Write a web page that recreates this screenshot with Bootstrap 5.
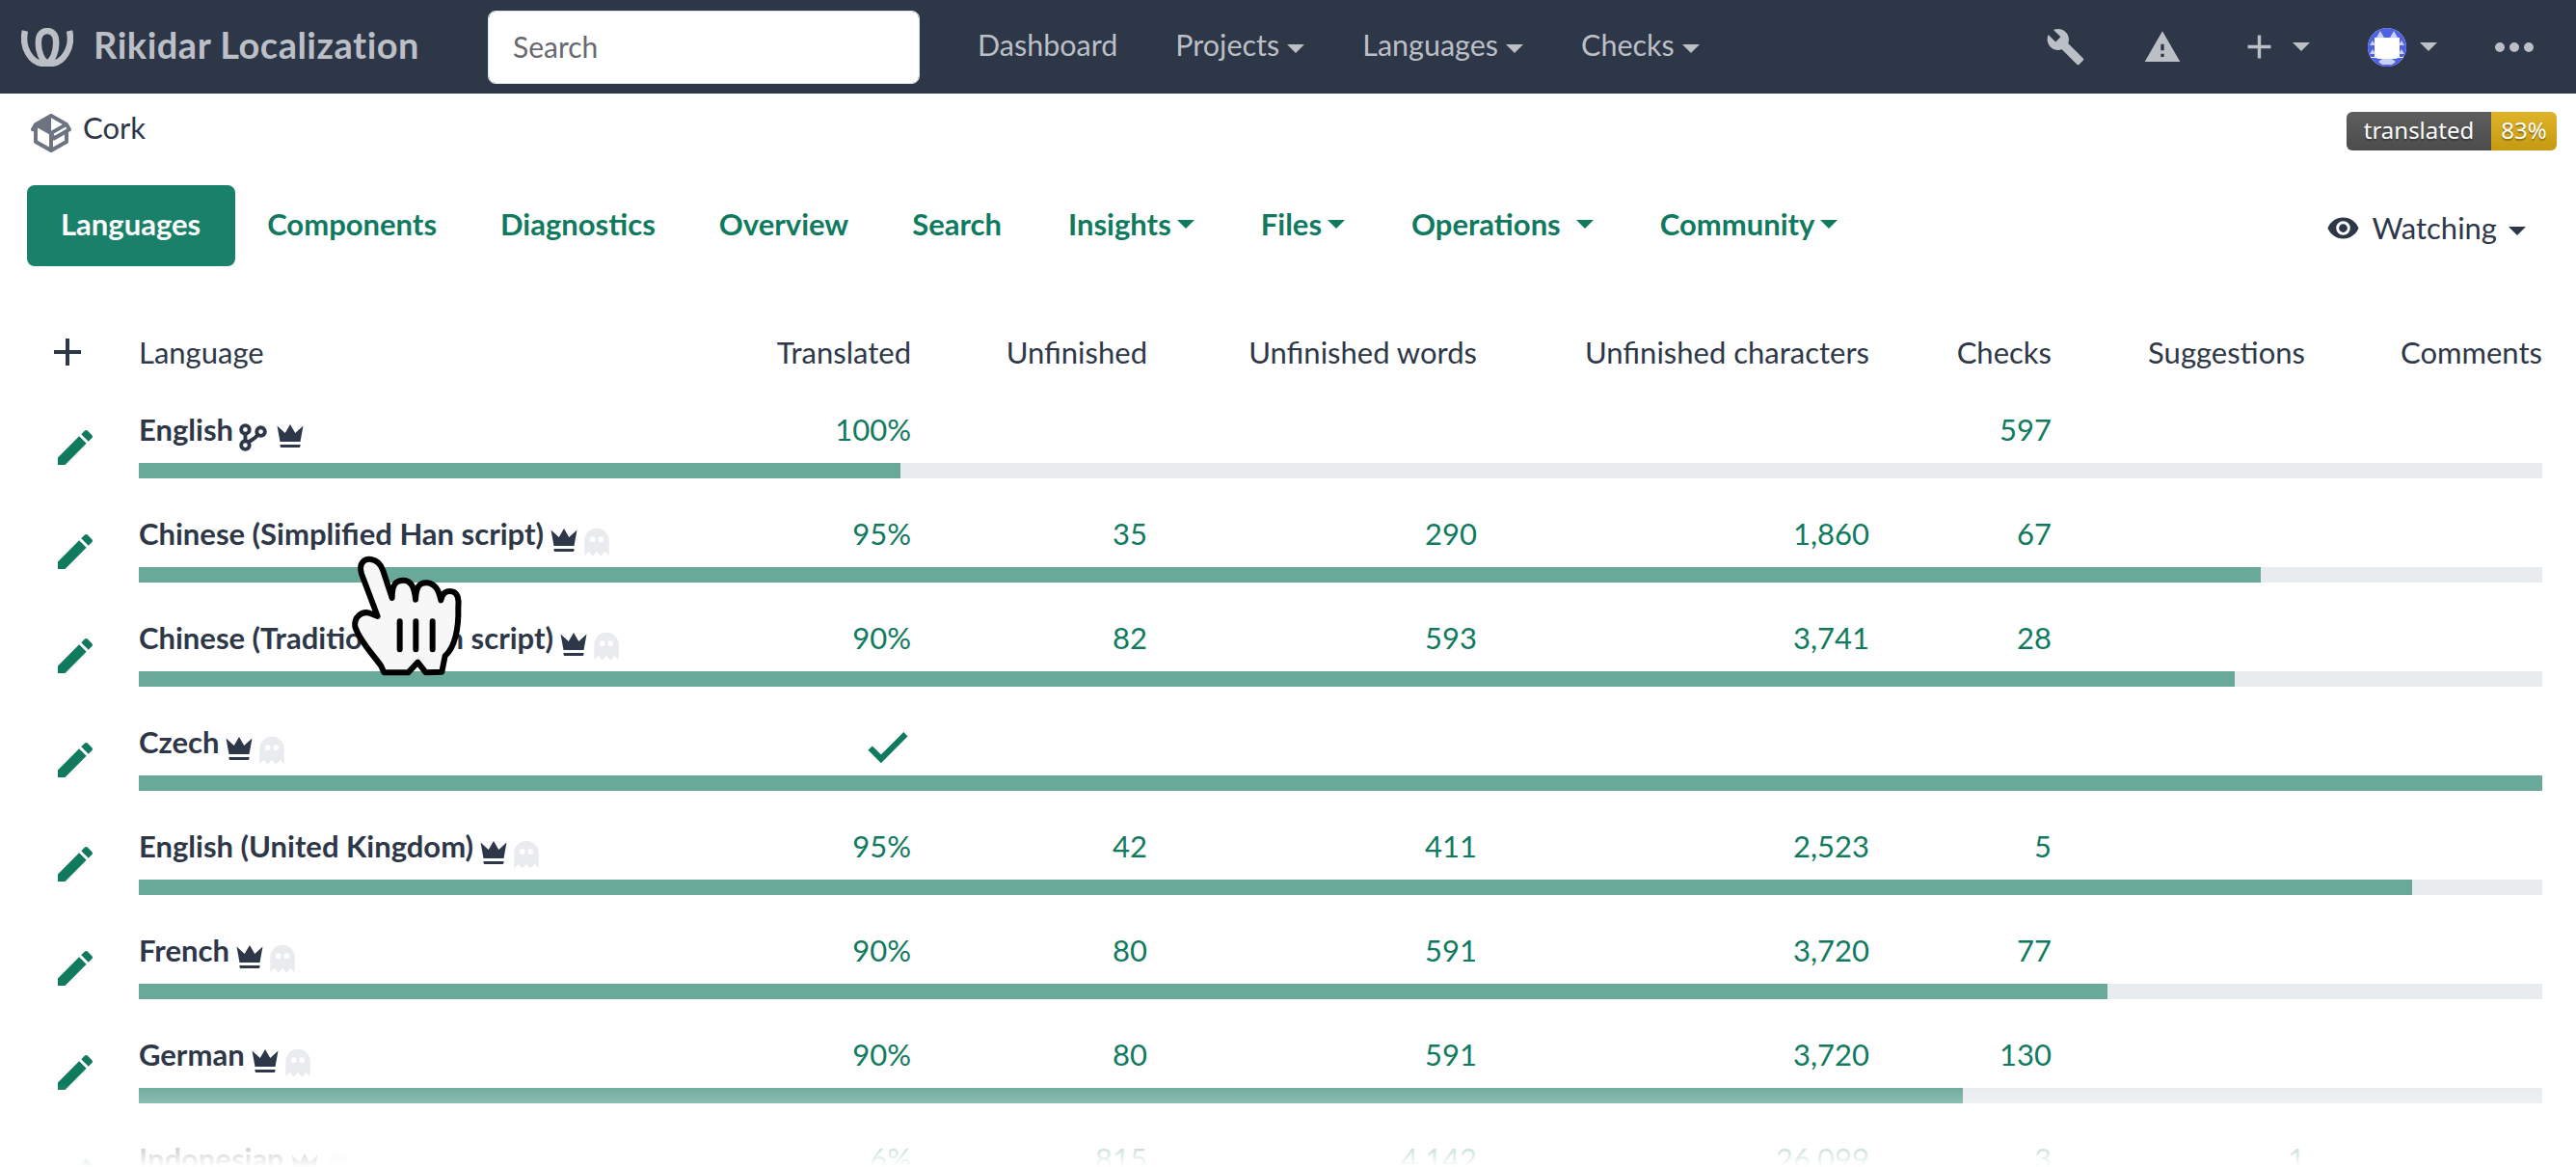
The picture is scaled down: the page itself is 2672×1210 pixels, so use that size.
<!DOCTYPE html>
<html lang="en">
<head>
    <meta charset="UTF-8">
    <title>Cork - Rikidar Localization</title>
    <link href="https://cdn.jsdelivr.net/npm/bootstrap@5.3.0/dist/css/bootstrap.min.css" rel="stylesheet">
    <style>
        html, body { height: 100%; overflow: hidden; }
        body { font-family: "Lato", "Liberation Sans", sans-serif; font-size: 31px; color: #2d3748; background: #fff; }
        svg { fill: currentColor; display: block; flex: none; }
        .top-bar { background: #2d3748; height: 97px; padding: 0 34px 0 22px; color: #bcbfc5; }
        .top-bar a { color: #bcbfc5; text-decoration: none; }
        .brand { font-size: 38px; letter-spacing: .5px; font-weight: 700; width: 484px; gap: 21px; padding-bottom: 4px; }
        .brand svg { margin-top: 4px; }
        .nav-search { width: 448px; height: 76px; border-radius: 8px; font-size: 30px; padding: 0 25px 2px; border: 1px solid #dee2e6; }
        .nav-search::placeholder { color: #666a70; }
        .top-links { gap: 60px; margin-left: 60px; padding-bottom: 3px; font-size: 30.5px; }
        .top-links .caret-down { margin-left: 8px; }
        .caret-down { display: inline-block; border-left: 9px solid transparent; border-right: 9px solid transparent; border-top: 9px solid currentColor; margin-left: 6px; vertical-align: middle; }
        .top-icons { margin-left: auto; }
        .top-icons .gap-big { margin-left: 60px; }
        .top-icons .gap-dots { margin-left: 50px; }
        .top-icons .caret-gap { margin-left: 14px; }
        .comp-line { height: 95px; padding: 12px 20px 0 29px; }
        .comp-name { gap: 9px; }
        .comp-name svg { color: #6c7482; margin-top: 5px; }
        .trans-badge { display: flex; height: 40px; margin-top: 7px; border-radius: 6px; overflow: hidden; font-size: 24px; line-height: 38px; color: #fff; text-shadow: 0 2px 1px rgba(0,0,0,.3); font-family: "Noto Sans", sans-serif; }
        .trans-badge .lab { background: linear-gradient(#5e5e5e, #4c4c4c); width: 150px; text-align: center; }
        .trans-badge .val { background: linear-gradient(#dfb32a, #c59a10); width: 68px; text-align: center; }
        .tabs-line { height: 84px; padding: 0 52px 0 28px; }
        .tabs-line .tab-link { color: #107a5f; font-weight: 700; text-decoration: none; padding: 0 33px 3px; height: 84px; display: flex; align-items: center; }
        .tabs-line .tab-link.on { background: #19806a; color: #fff; border-radius: 8px; padding: 0 36px 3px 35px; }
        .tabs-line .tab-link.wide-l { padding-left: 36px; }
        .watch-btn { margin-left: auto; gap: 12px; padding-top: 4px; }
        .watch-btn .caret-down { margin-left: 12px; }
        .lang-table { table-layout: fixed; width: 2637px; margin: 60px 0 0; --bs-table-color: #2d3748; --bs-table-bg: transparent; }
        .lang-table th, .lang-table td { padding: 0; }
        .lang-table th { font-weight: 400; height: 88px; padding-bottom: 30px; vertical-align: middle; }
        .col-w1 { width: 144px; } .col-w2 { width: 656px; } .col-w3 { width: 145px; } .col-w4 { width: 245px; }
        .col-w5 { width: 342px; } .col-w6 { width: 407px; } .col-w7 { width: 189px; } .col-w8 { width: 263px; } .col-w9 { width: 246px; }
        .head-plus { margin-left: 46px; }
        .lang-table .txt-row td { height: 56px; padding-top: 3px; vertical-align: top; line-height: 36px; color: #107a5f; }
        .lang-table .bar-row td { height: 52px; vertical-align: top; }
        .lang-table .txt-row td.pen-cell { color: #107a5f; padding: 16px 0 0 54px; }
        .lang-table .txt-row td.name-cell { color: #2d3748; font-weight: 700; }
        .name-wrap .src-ic { margin: 12px 3px 0 6px; }
        .name-wrap .crown-ic { margin-top: 7px; margin-left: 3px; }
        .name-wrap .ghost-ic { margin-top: 10px; margin-left: -1px; color: #e9ebee; }
        .check-ic { margin-top: -3px; margin-right: -2px; }
        .lang-bar { height: 16px; border-radius: 0; background: #e9ecef; }
        .lang-bar .progress-bar { background: #69a99a; }
        .fade-out { position: absolute; left: 0; right: 0; bottom: 0; height: 86px; background: linear-gradient(rgba(255,255,255,0), rgba(255,255,255,.84) 84%, #fff); }
        .hand-cursor { position: absolute; left: 350px; top: 565px; }
    </style>
</head>
<body>

<svg width="0" height="0" class="position-absolute">
    <symbol id="i-pencil" viewBox="0 0 24 24"><path d="M20.71,7.04C21.1,6.65 21.1,6 20.71,5.63L18.37,3.29C18,2.9 17.35,2.9 16.96,3.29L15.12,5.12L18.87,8.87M3,17.25V21H6.75L17.81,9.93L14.06,6.18L3,17.25Z"/></symbol>
    <symbol id="i-crown" viewBox="0 0 24 24"><path d="M5 16L3 5L8.5 10L12 4L15.5 10L21 5L19 16H5M19 19C19 19.6 18.6 20 18 20H6C5.4 20 5 19.6 5 19V18H19V19Z"/></symbol>
    <symbol id="i-ghost" viewBox="0 0 24 24"><path d="M12,2A9,9 0 0,0 3,11V22L6,19L9,22L12,19L15,22L18,19L21,22V11A9,9 0 0,0 12,2M9,8A2,2 0 0,1 11,10A2,2 0 0,1 9,12A2,2 0 0,1 7,10A2,2 0 0,1 9,8M15,8A2,2 0 0,1 17,10A2,2 0 0,1 15,12A2,2 0 0,1 13,10A2,2 0 0,1 15,8Z"/></symbol>
    <symbol id="i-check" viewBox="0 0 24 24"><path d="M21,7L9,19L3.5,13.5L4.91,12.09L9,16.17L19.59,5.59L21,7Z" stroke="currentColor" stroke-width=".8"/></symbol>
</svg>

<!-- Header -->
<nav class="top-bar d-flex align-items-center">
    <a href="#" class="brand d-flex align-items-center">
        <svg width="54" height="40" viewBox="0 0 54 40"><path d="M4 3C0 20 10 37 24 37C33 37 37 22 36 13C36 6 31 3 27 3C23 3 18 6 18 13C17 22 21 37 30 37C44 37 54 20 50 3" fill="none" stroke="currentColor" stroke-width="6.5"/></svg>
        Rikidar Localization
    </a>
    <input type="text" class="form-control nav-search" placeholder="Search">
    <div class="top-links d-flex">
        <a href="#">Dashboard</a>
        <a href="#">Projects<span class="caret-down"></span></a>
        <a href="#">Languages<span class="caret-down"></span></a>
        <a href="#">Checks<span class="caret-down"></span></a>
    </div>
    <div class="top-icons d-flex align-items-center">
        <svg width="41" height="41" viewBox="0 0 24 24"><path d="M22.7,19L13.6,9.9C14.5,7.6 14,4.9 12.1,3C10.1,1 7.1,0.6 4.7,1.7L9,6L6,9L1.6,4.7C0.4,7.1 0.9,10.1 2.9,12.1C4.8,14 7.5,14.5 9.8,13.6L18.9,22.7C19.3,23.1 19.9,23.1 20.3,22.7L22.6,20.4C23.1,20 23.1,19.3 22.7,19Z"/></svg>
        <svg class="gap-big" width="40" height="40" viewBox="0 0 24 24"><path d="M13,14H11V10H13M13,18H11V16H13M1,21H23L12,2L1,21Z"/></svg>
        <svg class="gap-big" width="41" height="41" viewBox="0 0 24 24"><path d="M19,13H13V19H11V13H5V11H11V5H13V11H19V13Z"/></svg>
        <span class="caret-down caret-gap"></span>
        <svg class="gap-big" width="40" height="40" viewBox="0 0 40 40">
            <defs><clipPath id="av"><circle cx="20" cy="20" r="20"/></clipPath></defs>
            <g clip-path="url(#av)">
                <rect width="40" height="40" fill="#fff"/>
                <path d="M0 0h40v10H0zM0 10h7v20H0zM33 10h7v20h-7zM0 31h40v9H0z" fill="#4f62e6"/>
                <path d="M9 10l4-7 4 7zM23 10l4-7 4 7zM2 18l3-5 3 5zM32 18l3-5 3 5zM2 27l3-5 3 5zM32 27l3-5 3 5zM11 35l4-3h10l4 3-4 3H15z" fill="#c9d0fb"/>
                <path d="M9 10h22l-3 4v16l3 2H9l3-2V14z" fill="#fff"/>
            </g>
        </svg>
        <span class="caret-down caret-gap"></span>
        <svg class="gap-dots" width="60" height="60" viewBox="0 0 24 24"><path d="M16,12A2,2 0 0,1 18,10A2,2 0 0,1 20,12A2,2 0 0,1 18,14A2,2 0 0,1 16,12M10,12A2,2 0 0,1 12,10A2,2 0 0,1 14,12A2,2 0 0,1 12,14A2,2 0 0,1 10,12M4,12A2,2 0 0,1 6,10A2,2 0 0,1 8,12A2,2 0 0,1 6,14A2,2 0 0,1 4,12Z"/></svg>
    </div>
</nav>

<div class="comp-line d-flex justify-content-between">
    <div class="comp-name d-flex align-items-start">
        <svg width="48" height="48" viewBox="0 0 24 24"><path d="M2,10.96C1.5,10.68 1.35,10.07 1.63,9.59L3.13,7C3.24,6.8 3.41,6.66 3.6,6.58L11.43,2.18C11.59,2.06 11.79,2 12,2C12.21,2 12.41,2.06 12.57,2.18L20.47,6.62C20.66,6.72 20.82,6.88 20.91,7.08L22.36,9.6C22.64,10.08 22.47,10.69 22,10.96L21,11.54V16.5C21,16.88 20.79,17.21 20.47,17.38L12.57,21.82C12.41,21.94 12.21,22 12,22C11.79,22 11.59,21.94 11.43,21.82L3.53,17.38C3.21,17.21 3,16.88 3,16.5V10.96C2.7,11.13 2.32,11.14 2,10.96M12,4.15V4.15L12,10.85V10.85L17.96,7.5L12,4.15M5,15.91L11,19.29V12.58L5,9.21V15.91M19,15.91V12.69L14,15.59C13.67,15.77 13.28,15.76 13,15.6V19.29L19,15.91M13.85,13.36L20.13,9.73L19.55,8.72L13.27,12.35L13.85,13.36Z"/></svg>
        <span>Cork</span>
    </div>
    <div class="trans-badge"><span class="lab">translated</span><span class="val">83%</span></div>
</div>

<div class="tabs-line d-flex align-items-center">
    <a class="tab-link on" href="#">Languages</a>
    <a class="tab-link" href="#">Components</a>
    <a class="tab-link" href="#">Diagnostics</a>
    <a class="tab-link" href="#">Overview</a>
    <a class="tab-link" href="#">Search</a>
    <a class="tab-link wide-l" href="#">Insights<span class="caret-down"></span></a>
    <a class="tab-link wide-l" href="#">Files<span class="caret-down"></span></a>
    <a class="tab-link wide-l" href="#">Operations<span class="caret-down ms-3"></span></a>
    <a class="tab-link wide-l" href="#">Community<span class="caret-down"></span></a>
    <div class="watch-btn d-flex align-items-center">
        <svg width="35" height="35" viewBox="0 0 24 24"><path d="M12,9A3,3 0 0,0 9,12A3,3 0 0,0 12,15A3,3 0 0,0 15,12A3,3 0 0,0 12,9M12,17A5,5 0 0,1 7,12A5,5 0 0,1 12,7A5,5 0 0,1 17,12A5,5 0 0,1 12,17M12,4.5C7,4.5 2.73,7.61 1,12C2.73,16.39 7,19.5 12,19.5C17,19.5 21.27,16.39 23,12C21.27,7.61 17,4.5 12,4.5Z"/></svg>
        <span>Watching<span class="caret-down"></span></span>
    </div>
</div>

<table class="table table-borderless lang-table">
    <colgroup>
        <col class="col-w1"><col class="col-w2"><col class="col-w3"><col class="col-w4">
        <col class="col-w5"><col class="col-w6"><col class="col-w7"><col class="col-w8"><col class="col-w9">
    </colgroup>
    <thead>
        <tr>
            <th><svg class="head-plus" width="48" height="48" viewBox="0 0 24 24"><path d="M19,13H13V19H11V13H5V11H11V5H13V11H19V13Z"/></svg></th>
            <th>Language</th>
            <th class="text-end">Translated</th>
            <th class="text-end">Unfinished</th>
            <th class="text-end">Unfinished words</th>
            <th class="text-end">Unfinished characters</th>
            <th class="text-end">Checks</th>
            <th class="text-end">Suggestions</th>
            <th class="text-end">Comments</th>
        </tr>
    </thead>
    <tbody id="lang-rows"></tbody>
</table>

<div class="fade-out"></div>

<svg class="hand-cursor" width="140" height="145" viewBox="0 0 420 435">
    <path d="M125 222L75 90C65 55 85 42 105 45C125 48 135 60 142 80L170 165C170 125 180 110 205 110C225 110 240 125 243 170C245 130 255 115 280 118C305 122 315 140 322 172C325 150 340 140 358 145C378 150 378 175 376 195C378 260 365 320 335 345L325 395L275 397L250 365L220 397L145 397L135 375C110 340 70 300 55 255C50 225 75 205 100 212Z" fill="#f7f7f7" stroke="#000" stroke-width="18" stroke-linejoin="round"/>
    <path d="M194 238v87M244 238v87M296 238v87" stroke="#000" stroke-width="18" stroke-linecap="round" fill="none"/>
</svg>

<script>
    const LANGS = [
        { name: 'English', src: true, pct: '100%', bar: 31.7, checks: '597' },
        { name: 'Chinese (Simplified Han script)', pct: '95%', un: '35', words: '290', chars: '1,860', checks: '67', bar: 88.3 },
        { name: 'Chinese (Traditional Han script)', pct: '90%', un: '82', words: '593', chars: '3,741', checks: '28', bar: 87.2 },
        { name: 'Czech', done: true, bar: 100 },
        { name: 'English (United Kingdom)', pct: '95%', un: '42', words: '411', chars: '2,523', checks: '5', bar: 94.6 },
        { name: 'French', pct: '90%', un: '80', words: '591', chars: '3,720', checks: '77', bar: 81.9 },
        { name: 'German', pct: '90%', un: '80', words: '591', chars: '3,720', checks: '130', bar: 75.9 },
        { name: 'Indonesian', pct: '6%', un: '815', words: '4,142', chars: '26,099', checks: '3', sug: '1', bar: 5 }
    ];

    const use = (id, size, cls = '') => `<svg class="${cls}" width="${size}" height="${size}"><use href="#${id}"/></svg>`;
    const srcIcon = `<svg class="src-ic" width="29" height="29" viewBox="0 0 27 27"><g fill="none" stroke="currentColor" stroke-width="3.6"><circle cx="6" cy="6" r="4"/><circle cx="6" cy="21" r="4"/><circle cx="21" cy="8" r="4"/><path d="M6 10v7M9 18c4-2 6-3 9-7"/></g></svg>`;

    document.getElementById('lang-rows').innerHTML = LANGS.map(l => `
        <tr class="txt-row">
            <td class="pen-cell" rowspan="2">${use('i-pencil', 48)}</td>
            <td class="name-cell"><div class="name-wrap d-flex align-items-start">${l.name}${l.src ? srcIcon : ''}${use('i-crown', 36, 'crown-ic')}${l.src ? '' : use('i-ghost', 34, 'ghost-ic')}</div></td>
            <td class="text-end">${l.done ? `<div class="d-flex justify-content-end">${use('i-check', 53, 'check-ic')}</div>` : l.pct}</td>
            <td class="text-end">${l.un || ''}</td>
            <td class="text-end">${l.words || ''}</td>
            <td class="text-end">${l.chars || ''}</td>
            <td class="text-end">${l.checks || ''}</td>
            <td class="text-end">${l.sug || ''}</td>
            <td class="text-end"></td>
        </tr>
        <tr class="bar-row">
            <td colspan="8"><div class="progress lang-bar"><div class="progress-bar" style="width:${l.bar}%"></div></div></td>
        </tr>`).join('');
</script>
<script src="https://cdn.jsdelivr.net/npm/bootstrap@5.3.0/dist/js/bootstrap.bundle.min.js"></script>
</body>
</html>
